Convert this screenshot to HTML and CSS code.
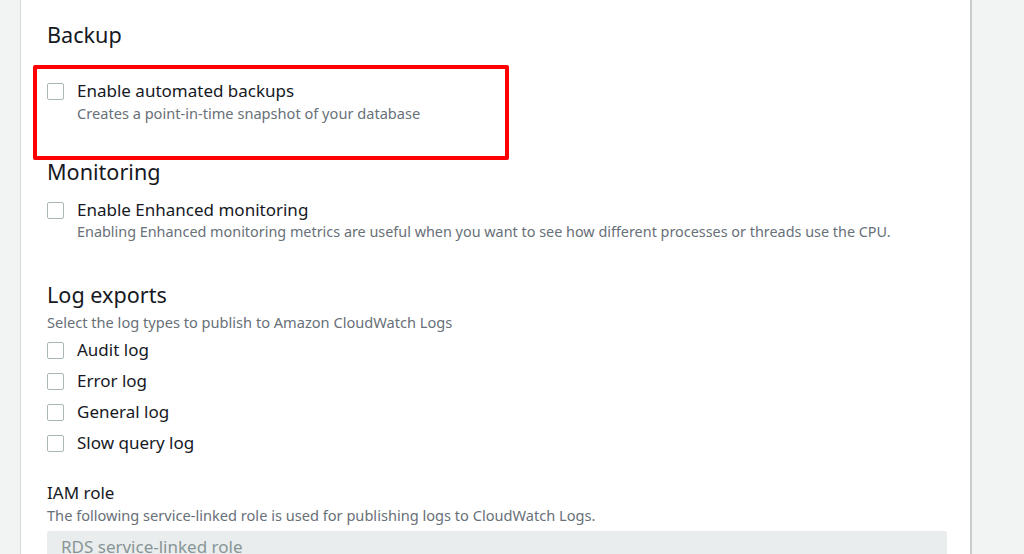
FILE: index.html
```html
<!DOCTYPE html>
<html>
<head>
<meta charset="utf-8">
<link rel="stylesheet" href="styles.css">
</head>
<body>
<div class="page">
  <div class="gutter"></div>
  <main class="card">
    <section class="section backup">
      <h2 class="heading">Backup</h2>
      <div class="option first">
        <span class="box"></span>
        <div class="texts">
          <div class="label">Enable automated backups</div>
          <div class="desc">Creates a point-in-time snapshot of your database</div>
        </div>
      </div>
      <div class="highlight"></div>
    </section>

    <section class="section monitoring">
      <h2 class="heading">Monitoring</h2>
      <div class="option enhanced">
        <span class="box"></span>
        <div class="texts">
          <div class="label">Enable Enhanced monitoring</div>
          <div class="desc tight">Enabling Enhanced monitoring metrics are useful when you want to see how different processes or threads use the CPU.</div>
        </div>
      </div>
    </section>

    <section class="section logs">
      <h2 class="heading">Log exports</h2>
      <div class="desc intro">Select the log types to publish to Amazon CloudWatch Logs</div>
      <div class="loglist">
        <div class="option"><span class="box"></span><div class="label">Audit log</div></div>
        <div class="option"><span class="box"></span><div class="label">Error log</div></div>
        <div class="option"><span class="box"></span><div class="label">General log</div></div>
        <div class="option"><span class="box"></span><div class="label">Slow query log</div></div>
      </div>
    </section>

    <section class="section iam">
      <div class="label">IAM role</div>
      <div class="desc">The following service-linked role is used for publishing logs to CloudWatch Logs.</div>
      <div class="input">RDS service-linked role</div>
    </section>
  </main>
  <div class="rightbar"></div>
</div>
</body>
</html>
```

FILE: styles.css
```css
* { box-sizing: border-box; margin: 0; padding: 0; }
html, body { width: 1024px; height: 554px; overflow: hidden; }
body {
  background: #f2f3f3;
  font-family: "Noto Sans", "Open Sans", sans-serif;
  color: #16191f;
}
.page {
  display: flex;
  height: 554px;
}
.gutter {
  width: 21px;
  flex: none;
  border-right: 1px solid #d5dbdb;
  background: #f2f3f3;
}
.card {
  width: 951px;
  flex: none;
  background: #ffffff;
  border-right: 2px solid #c8cccc;
  padding: 20px 23px 0 26px;
}
.rightbar { flex: 1; background: #f2f3f3; }

.section { position: relative; }
.heading {
  font-size: 21.6px;
  font-weight: 400;
  line-height: 30px;
  color: #16191f;
}
.option {
  display: flex;
  align-items: flex-start;
  gap: 13px;
}
.box {
  width: 17px;
  height: 17px;
  flex: none;
  border: 1px solid #aab7b8;
  border-radius: 2px;
  background: #fff;
  margin-top: 3px;
}
.label {
  font-size: 17px;
  line-height: 22px;
  color: #16191f;
}
.desc {
  font-size: 14.6px;
  line-height: 22px;
  color: #687078;
}
.desc.tight { font-size: 14.4px; }
.option.first { margin-top: 30px; }
.highlight {
  position: absolute;
  left: -14px;
  top: 45px;
  width: 476px;
  height: 95px;
  border: 4px solid #ff0000;
  border-radius: 2px;
}
.monitoring { margin-top: 33px; }
.option.enhanced { margin-top: 12px; }
.logs { margin-top: 37px; }
.desc.intro { margin-top: 1px; }
.loglist {
  margin-top: 6px;
  display: flex;
  flex-direction: column;
  gap: 9px;
}
.iam { margin-top: 28px; }
.input {
  margin-top: 5px;
  width: 900px;
  height: 36px;
  background: #eaeded;
  border-radius: 2px;
  padding: 5px 14px;
  font-size: 17px;
  line-height: 22px;
  color: #879596;
}
```
